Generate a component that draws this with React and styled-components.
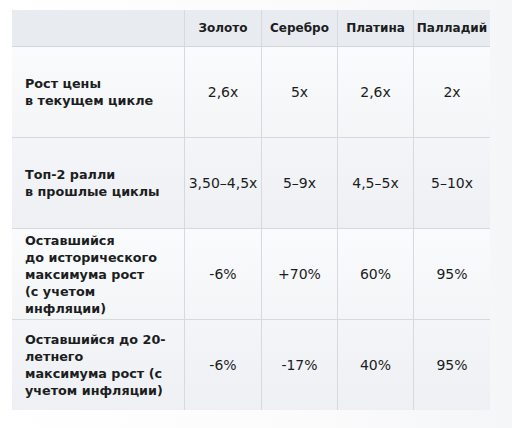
import React from 'react'
import styled, { createGlobalStyle } from 'styled-components'

const Global = createGlobalStyle`
  html, body {
    margin: 0;
    padding: 0;
  }
  body {
    width: 512px;
    height: 428px;
    overflow: hidden;
    background: linear-gradient(90deg, #ffffff 0%, #fbfbfc 60%, #f5f6f8 100%);
    font-family: "DejaVu Sans", "Open Sans", sans-serif;
    color: #1b1d21;
  }
`

const Page = styled.div`
  padding: 10px 22px 0 12px;
`

const Grid = styled.div`
  display: grid;
  width: 478px;
  grid-template-columns: 172px 77px 76px 76px 77px;
  grid-template-rows: 37px 91px 91px 91px 90px;
`

const HeadCell = styled.div`
  display: flex;
  align-items: center;
  justify-content: center;
  background: #e8ebef;
  border-bottom: 1px solid #d3d6db;
  border-left: ${p => (p.first ? 'none' : '1px solid #d6d9de')};
  font-size: 12px;
  font-weight: 700;
  white-space: nowrap;
`

const Label = styled.div`
  display: flex;
  flex-direction: column;
  justify-content: center;
  padding-left: 13px;
  background: ${p => (p.shade ? 'linear-gradient(180deg, #f4f5f8, #eef0f3)' : 'linear-gradient(180deg, #fafbfc, #f3f5f7)')};
  border-bottom: ${p => (p.last ? 'none' : '1px solid #d6d9de')};
  font-size: 12.75px;
  font-weight: 700;
  line-height: 17px;
  white-space: nowrap;
`

const Value = styled.div`
  display: flex;
  align-items: center;
  justify-content: center;
  background: ${p => (p.shade ? 'linear-gradient(180deg, #f4f5f8, #eef0f3)' : 'linear-gradient(180deg, #fafbfc, #f3f5f7)')};
  border-left: 1px solid #d6d9de;
  border-bottom: ${p => (p.last ? 'none' : '1px solid #d6d9de')};
  font-size: 14px;
  font-weight: 400;
  white-space: nowrap;
`

const metals = ['Золото', 'Серебро', 'Платина', 'Палладий']

const rows = [
  { label: ['Рост цены', 'в текущем цикле'], values: ['2,6x', '5x', '2,6x', '2x'] },
  { label: ['Топ-2 ралли', 'в прошлые циклы'], values: ['3,50–4,5x', '5–9x', '4,5–5x', '5–10x'] },
  {
    label: ['Оставшийся', 'до исторического', 'максимума рост', '(с учетом', 'инфляции)'],
    values: ['-6%', '+70%', '60%', '95%'],
  },
  {
    label: ['Оставшийся до 20-', 'летнего', 'максимума рост (с', 'учетом инфляции)'],
    values: ['-6%', '-17%', '40%', '95%'],
  },
]

export default function App() {
  return (
    <Page>
      <Global />
      <Grid>
        <HeadCell first />
        {metals.map(m => (
          <HeadCell key={m}>{m}</HeadCell>
        ))}
        {rows.map((r, i) => {
          const shade = i % 2 === 1
          const last = i === rows.length - 1
          return (
            <React.Fragment key={i}>
              <Label shade={shade} last={last}>
                {r.label.map(l => (
                  <span key={l}>{l}</span>
                ))}
              </Label>
              {r.values.map((v, j) => (
                <Value key={j} shade={shade} last={last}>
                  {v}
                </Value>
              ))}
            </React.Fragment>
          )
        })}
      </Grid>
    </Page>
  )
}
